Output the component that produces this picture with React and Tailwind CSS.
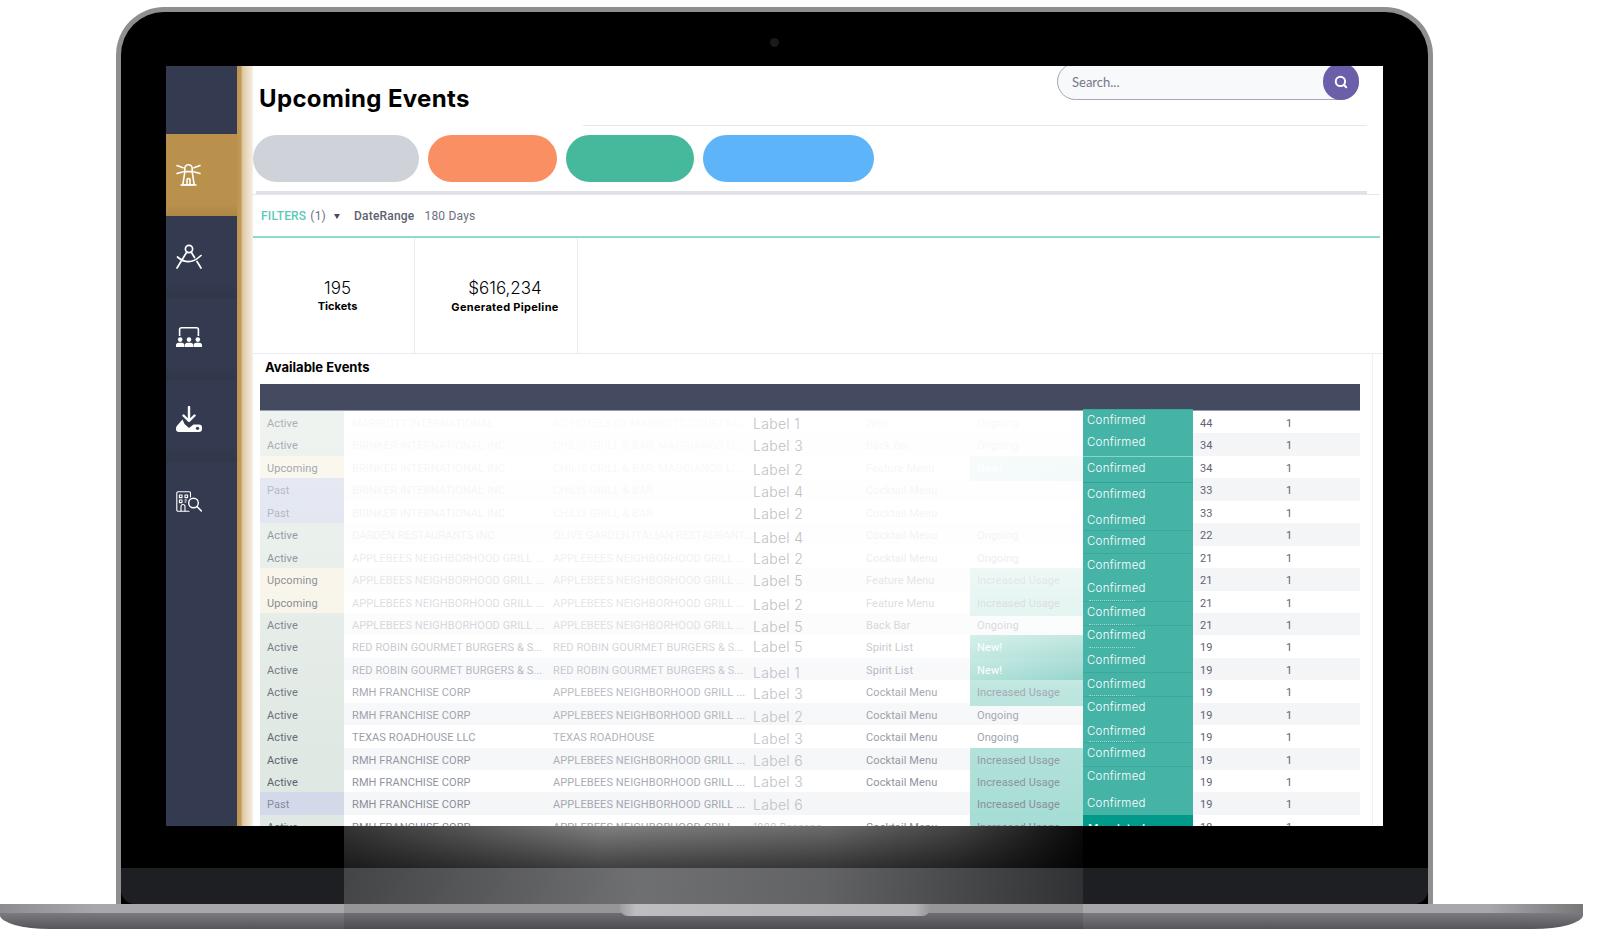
import React from "react";
import { Search } from "lucide-react";

const A = "APPLEBEES NEIGHBORHOOD GRILL ...";
const R = "RED ROBIN GOURMET BURGERS & S...";
const B = "BRINKER INTERNATIONAL INC";
const H = "RMH FRANCHISE CORP";
const CM = "Cocktail Menu";
const IU = "Increased Usage";
const rows = [
  ["Active", "MARRIOTT INTERNATIONAL", "AC HOTELS BY MARRIOTT, COURTYA...", "Label 1", "Well", "Ongoing", "44", 0],
  ["Active", B, "CHILIS GRILL & BAR, MAGGIANOS LI...", "Label 3", "Back Bar", "Ongoing", "34", 0],
  ["Upcoming", B, "CHILIS GRILL & BAR, MAGGIANOS LI...", "Label 2", "Feature Menu", "New!", "34", 1],
  ["Past", B, "CHILIS GRILL & BAR", "Label 4", CM, "", "33", 1],
  ["Past", B, "CHILIS GRILL & BAR", "Label 2", CM, "", "33", 0],
  ["Active", "DARDEN RESTAURANTS INC", "OLIVE GARDEN ITALIAN RESTAURANT...", "Label 4", CM, "Ongoing", "22", 2],
  ["Active", A, A, "Label 2", CM, "Ongoing", "21", 0],
  ["Upcoming", A, A, "Label 5", "Feature Menu", IU, "21", 0],
  ["Upcoming", A, A, "Label 2", "Feature Menu", IU, "21", 1],
  ["Active", A, A, "Label 5", "Back Bar", "Ongoing", "21", 1],
  ["Active", R, R, "Label 5", "Spirit List", "New!", "19", -1],
  ["Active", R, R, "Label 1", "Spirit List", "New!", "19", 2],
  ["Active", H, A, "Label 3", CM, IU, "19", 1],
  ["Active", H, A, "Label 2", CM, "Ongoing", "19", 1],
  ["Active", "TEXAS ROADHOUSE LLC", "TEXAS ROADHOUSE", "Label 3", CM, "Ongoing", "19", 1],
  ["Active", H, A, "Label 6", CM, IU, "19", 0],
  ["Active", H, A, "Label 3", CM, IU, "19", -1],
  ["Past", H, A, "Label 6", "", IU, "19", 0],
  ["Active", H, A, "1000 Reasons", CM, IU, "19", 0],
];

// top, height, text centre (page coordinates), ghost line flag
const confirmed = [
  [409, 22, 420, 0], [431, 25, 442, 0], [456, 25.5, 468, 0], [481.5, 25.5, 494, 0],
  [507, 23, 520, 0], [530, 23, 541, 0], [553, 24, 565, 0], [577, 24, 588, 1],
  [601, 24, 612, 1], [625, 23, 635, 1], [648, 24, 660, 0], [672, 24, 684, 1],
  [696, 23, 707, 0], [719, 23, 731, 1], [742, 24, 753, 0], [766, 24, 776, 0],
  [790, 25, 803, 0],
];

const statusBg = { Active: "bg-[#dfe8e2]", Upcoming: "bg-[#f6f1e2]", Past: "bg-[#d3d9e9]" };
const statusText = { Active: "text-[#5c6270]", Upcoming: "text-[#5c6270]", Past: "text-[#858c9e]" };

function Lighthouse() {
  return (
    <svg className="mt-[3px]" width="25" height="22" viewBox="0 0 25 22" fill="none" stroke="white" strokeWidth="1.6" strokeLinecap="round" strokeLinejoin="round">
      <path d="M1 1.5 L7 3.8 M24 1.5 L18 3.8 M1 9.5 L6.5 8 M24 9.5 L18.5 8" />
      <path d="M8.8 7 V4.5 a3.7 3.7 0 0 1 7.4 0 V7 M7.8 7.6 H17.2" />
      <path d="M8.8 8 L6.8 20.8 H18.2 L16.2 8" />
      <path d="M11 20.5 V16 a1.5 1.5 0 0 1 3 0 V20.5 M5 21 H20" />
    </svg>
  );
}
function Compass() {
  return (
    <svg width="26" height="26" viewBox="0 0 26 26" fill="none" stroke="white" strokeWidth="1.7" strokeLinecap="round">
      <circle cx="13" cy="6" r="3.6" />
      <path d="M10.8 9 L1 25 M15.2 9 L18.5 14.5 M21 18.5 L25 25" />
      <path d="M1.5 14 Q13 24 25 12.5" />
    </svg>
  );
}
function Theater() {
  const body = (x) => `M${x - 4.2} 20 v-1.6 a2.6 2.6 0 0 1 2.6-2.6 h3.2 a2.6 2.6 0 0 1 2.6 2.6 V20 Z`;
  return (
    <svg width="26" height="21" viewBox="0 0 26 21" fill="none">
      <path d="M3.6 9 V2.6 a1.8 1.8 0 0 1 1.8-1.8 H20.6 a1.8 1.8 0 0 1 1.8 1.8 V9" stroke="white" strokeWidth="1.6" />
      {[4.2, 13, 21.8].map((x) => (
        <g key={x} fill="white">
          <circle cx={x} cy="12.6" r="2.3" />
          <path d={body(x)} />
        </g>
      ))}
    </svg>
  );
}
function Download() {
  return (
    <svg width="26" height="27" viewBox="0 0 26 27" fill="none">
      <path d="M13 1 V14 M7.5 9.5 L13 15 L18.5 9.5" stroke="white" strokeWidth="2.4" strokeLinecap="round" strokeLinejoin="round" />
      <path d="M6.5 13.5 L0.8 20 Q0 21 0 22.5 V23 a3 3 0 0 0 3 3 H23 a3 3 0 0 0 3-3 v-1.5 a3 3 0 0 0-3-3 H17.5 L13 22 L8.5 18 Z" fill="white" />
      <circle cx="21.5" cy="22.3" r="1.6" fill="#343b50" />
    </svg>
  );
}
function BuildingSearch() {
  return (
    <svg width="26" height="21" viewBox="0 0 26 21" fill="none" stroke="white" strokeWidth="1.1" strokeLinecap="round" strokeLinejoin="round">
      <path d="M14.5 6 V2 a1.2 1.2 0 0 0-1.2-1.2 H2 a1.2 1.2 0 0 0-1.2 1.2 V19 a1.2 1.2 0 0 0 1.2 1.2 H13" />
      <path d="M3.4 4 h2.6 v2.6 h-2.6 Z M9 4 h2.6 v2.6 h-2.6 Z M3.4 9 h2.6 v2.6 h-2.6 Z M9 9 h1.6 M9 11 h1" />
      <path d="M5 20 V15.5 a2 2 0 0 1 4 0 V20" />
      <circle cx="17.5" cy="12" r="4.8" strokeWidth="1.4" />
      <path d="M21 15.5 L25.4 20" strokeWidth="1.6" />
    </svg>
  );
}

function NavItem({ children, active, last }) {
  return (
    <div
      className={
        "h-[82px] flex items-center justify-center pr-[26px] pb-[3px] " +
        (active
          ? "bg-[linear-gradient(to_bottom,#b9914d_0%,#b9914d_85%,#ad8745_100%)]"
          : last
          ? "bg-[#343b50]"
          : "bg-[linear-gradient(to_bottom,#343b50_0%,#343b50_80%,#30374a_100%)]")
      }
    >
      {children}
    </div>
  );
}

function Row({ r, i }) {
  const [status, c2, c3, label, c5, c6, n, off] = r;
  const cellBg =
    c6 === "New!"
      ? "bg-[linear-gradient(135deg,#8fd5c9,#56bbac)] text-white"
      : c6 === IU
      ? "bg-[#a0dbd1] text-[#7d8290]"
      : "text-[#858a96]";
  return (
    <div
      className={
        "grid grid-cols-[84px_201px_200px_113px_112px_113px_110px_86px_82px] h-[22.45px] items-stretch text-[11px] leading-[25.5px] tracking-[0.1px] whitespace-nowrap " +
        (i % 2 === 1 ? "bg-[#f4f5f7]" : "bg-white")
      }
    >
      <div className={"pl-[7px] " + statusBg[status] + " " + statusText[status]}>{status}</div>
      <div className="pl-[8px] text-[#7d8290]">{c2}</div>
      <div className="pl-[8px] text-[#9a9ea9]">{c3}</div>
      <div
        className={
          "pl-[8px] relative z-20 font-['Inter'] font-light tracking-[0.3px] text-[#bdc0c7] " +
          (label.length > 8 ? "text-[10px]" : "text-[14px]")
        }
        style={{ top: off }}
      >
        {label}
      </div>
      <div className="pl-[8px] text-[#7d8290]">{c5}</div>
      <div className={"pl-[7px] " + cellBg}>{c6}</div>
      <div />
      <div className="pl-[7px] text-[#5f6472]">{n}</div>
      <div className="pl-[7px] text-[#5f6472]">1</div>
    </div>
  );
}

export default function App() {
  return (
    <div className="relative w-[1600px] h-[940px] bg-white overflow-hidden pt-[7px] font-['Roboto',sans-serif]">
      {/* lid */}
      <div className="ml-[116px] w-[1317px] h-[897px] rounded-t-[48px] bg-[#8f8f8f] px-[5px] pt-[5px]">
        <div className="relative h-[892px] rounded-t-[43px] bg-black flex flex-col">
          <div className="h-[54px] flex justify-center items-start pt-[26px]">
            <div className="w-[9px] h-[9px] rounded-full bg-[#1a1a1c]" />
          </div>
          {/* screen */}
          <div className="mx-[45px] h-[760px] flex bg-white overflow-hidden">
            <div className="w-[71px] shrink-0 bg-[#343b50]">
              <div className="h-[68px] bg-[#343b50]" />
              <NavItem active><Lighthouse /></NavItem>
              <NavItem><Compass /></NavItem>
              <NavItem><Theater /></NavItem>
              <NavItem><Download /></NavItem>
              <NavItem last><BuildingSearch /></NavItem>
            </div>
            <div className="w-[16px] shrink-0 bg-[linear-gradient(to_right,#bd9450_0%,#c19b5a_25%,#dfc9a3_35%,#ede0cb_75%,#f6efe4_100%)]" />
            <main className="flex-1 min-w-0">
              {/* header */}
              <div className="h-[69px] flex justify-between">
                <h1 className="pl-[6px] pt-[17px] font-['Inter'] font-bold text-[24px] leading-[32px] tracking-[0.35px] text-black whitespace-nowrap">
                  Upcoming Events
                </h1>
                <div className="w-[784px] mr-[16px] h-[60px] border-b border-[#e8e8e8] flex justify-end">
                  <div className="mr-[8px] mt-[-3px] w-[302px] h-[37px] rounded-full bg-[#f8f9fb] border border-[#a4a7b5] flex items-center justify-between">
                    <span className="pl-[14px] pt-[2px] font-['Lato'] text-[13px] text-[#747887]">Search...</span>
                    <span className="w-[36px] h-[37px] rounded-full bg-[#6a5fa8] flex items-center justify-center -mr-[1px]">
                      <Search size={14} strokeWidth={3.4} color="white" />
                    </span>
                  </div>
                </div>
              </div>
              {/* pills */}
              <div className="flex gap-[9px] h-[47px]">
                <div className="w-[166px] rounded-full bg-[#cfd2d9]" />
                <div className="w-[129px] rounded-full bg-[#f98f62]" />
                <div className="w-[128px] rounded-full bg-[#46b89c]" />
                <div className="w-[171px] rounded-full bg-[#5eb4f8]" />
              </div>
              <div className="mt-[9px] mr-[3px] border-b border-[#e6e6ec]">
                <div className="ml-[3px] mr-[13px] h-[3px] bg-[#e1e1e8]" />
              </div>
              {/* filters */}
              <div className="mr-[3px] h-[43px] border-b-2 border-[#8fdad0] flex items-center pl-[8px] pt-[1px] text-[12px] tracking-[0.2px] text-[#6b7080]">
                <span className="text-[#5cc8bb] font-medium">FILTERS</span>
                <span className="ml-[4px]">(1)</span>
                <span className="ml-[8px] w-0 h-0 border-x-[3.5px] border-x-transparent border-t-[5px] border-t-[#444a5f]" />
                <span className="ml-[14px] font-medium text-[#5c6270]">DateRange</span>
                <span className="ml-[10px]">180 Days</span>
              </div>
              {/* stats */}
              <div className="h-[116px] flex border-b border-[#eaebf1] text-black text-center">
                <div className="w-[162px] border-r border-[#eaebf1] pt-[38px] pl-[8px]">
                  <div className="font-['Inter'] font-light text-[17px] leading-[24px]">195</div>
                  <div className="font-['Inter'] font-bold text-[11px] leading-[12px]">Tickets</div>
                </div>
                <div className="w-[163px] border-r border-[#eaebf1] pt-[38px] pl-[18px]">
                  <div className="font-['Inter'] font-light text-[17px] leading-[24px]">$616,234</div>
                  <div className="font-['Inter'] font-bold text-[11px] leading-[14px] tracking-[0.3px]">Generated Pipeline</div>
                </div>
              </div>
              {/* table block */}
              <div className="mr-[10px] border-r border-[#f0f0f5] pl-[7px] pr-[12px] h-[473px]">
                <div className="h-[30px] pl-[5px] pb-[2px] flex items-center font-['Inter'] font-bold text-[13px] text-black">
                  Available Events
                </div>
                <div className="relative">
                  <div className="h-[27px] bg-[#444a5f] border-b border-[#9a9db0]" />
                  {rows.map((r, i) => (
                    <Row key={i} r={r} i={i} />
                  ))}
                  {/* washed-out overlays */}
                  <div className="absolute left-0 top-[27px] w-[84px] h-[415px] z-10 bg-[linear-gradient(to_bottom,rgba(255,255,255,0.5),rgba(255,255,255,0.3)_40%,rgba(255,255,255,0)_85%)]" />
                  <div className="absolute left-[84px] top-[27px] w-[739px] h-[415px] z-10 bg-[linear-gradient(to_bottom,rgba(255,255,255,0.95)_0%,rgba(255,255,255,0.9)_30%,rgba(255,255,255,0.68)_52%,rgba(255,255,255,0.3)_68%,rgba(255,255,255,0.05)_100%)]" />
                  {/* confirmed column */}
                  <div className="absolute left-[823px] top-[25px] w-[110px] z-20 flex flex-col text-white font-['Inter'] font-light text-[11.5px] tracking-[0.25px] leading-[14px]">
                    {confirmed.map(([t, h, c, ghost], i) => (
                      <div
                        key={i}
                        className={"relative bg-[#46b3a7] pl-[4px] overflow-hidden border-t " + (i === 2 ? "border-[#8ed3ca]" : i === 3 ? "border-[#2fa294]" : i % 3 === 1 ? "border-[#46b3a7]" : "border-[#3aa89b]")}
                        style={{ height: h, paddingTop: Math.max(0, c - t - 8) }}
                      >
                        Confirmed
                        {ghost ? <span className="absolute left-[6px] bottom-0 w-[46px] h-[1px] border-b border-dotted border-white/50" /> : null}
                      </div>
                    ))}
                    <div className="h-[20px] bg-[#00998a] pl-[5px] pt-[7px] font-medium">Mandated</div>
                  </div>
                </div>
              </div>
            </main>
          </div>
          <div className="h-[42px]" />
          <div className="h-[36px] bg-[#1e1f22] rounded-b-[14px]" />
        </div>
      </div>
      {/* base */}
      <div className="relative w-[1583px] h-[25px] rounded-b-[50px_14px] overflow-hidden">
        <div className="h-[9px] bg-[linear-gradient(to_right,#8d8c90_0%,#a8a7ab_6%,#a8a7ab_94%,#77777a_100%)]" />
        <div className="h-[16px] bg-[linear-gradient(to_bottom,#7b7a7f,#55555a)]" />
        <div className="absolute left-[620px] top-0 w-[310px] h-[12px] rounded-b-[8px] bg-[linear-gradient(to_right,#b0afb2,#d4d3d6_5%,#c9c8cb_95%,#a8a7aa)]" />
      </div>
      {/* reflection across the lower bezel */}
      <div className="absolute left-[344px] top-[826px] w-[739px] h-[103px] flex flex-col">
        <div className="h-[42px] bg-[linear-gradient(97deg,rgba(255,255,255,0.2)_0%,rgba(255,255,255,0.5)_35%,rgba(255,255,255,0.42)_65%,rgba(255,255,255,0.27)_82%,rgba(255,255,255,0.03)_100%)] [mask-image:linear-gradient(to_bottom,black,rgba(0,0,0,0.5))]" />
        <div className="h-[36px] bg-[linear-gradient(97deg,rgba(255,255,255,0.17)_0%,rgba(255,255,255,0.36)_40%,rgba(255,255,255,0.3)_65%,rgba(255,255,255,0.08)_100%)]" />
        <div className="h-[25px] bg-black/10" />
      </div>
    </div>
  );
}
